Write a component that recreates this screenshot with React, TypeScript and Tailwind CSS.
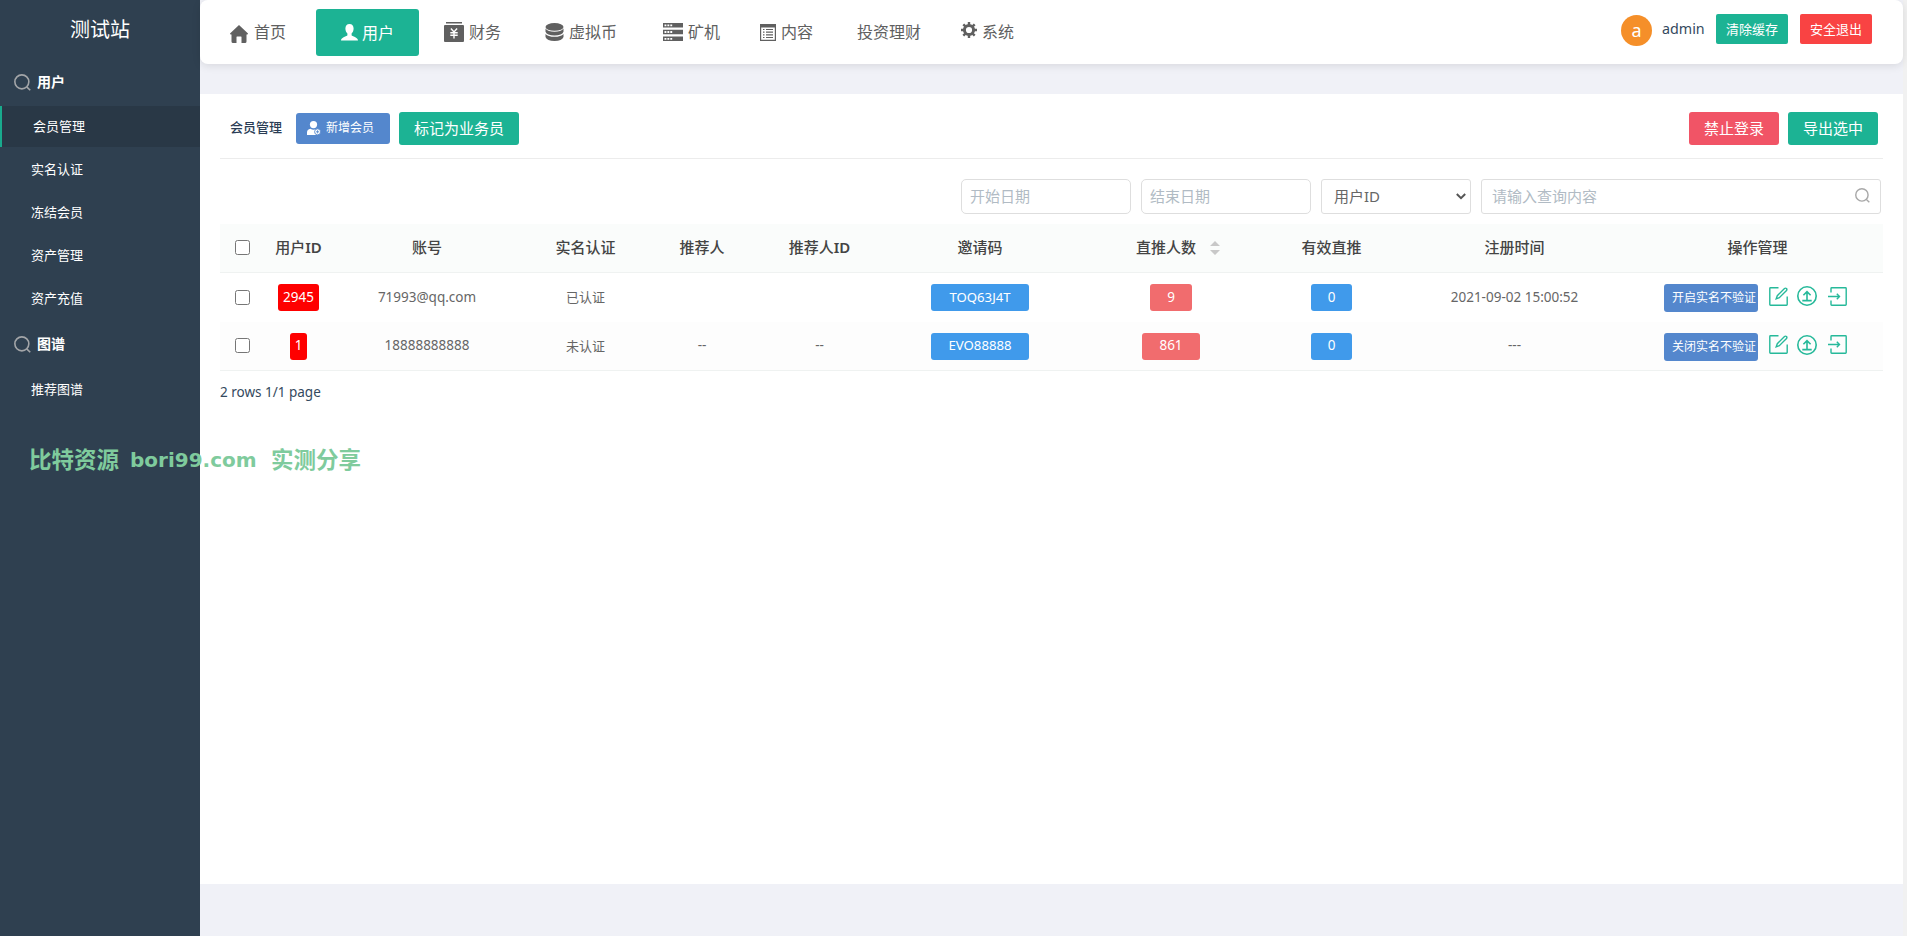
import { useState } from 'react';
import type { ReactNode } from 'react';

interface Member {
  id: string;
  account: string;
  verified: string;
  referrer: string;
  referrerId: string;
  code: string;
  direct: string;
  valid: string;
  createdAt: string;
  action: string;
}

const members: Member[] = [
  {
    id: '2945',
    account: '71993@qq.com',
    verified: '已认证',
    referrer: '',
    referrerId: '',
    code: 'TOQ63J4T',
    direct: '9',
    valid: '0',
    createdAt: '2021-09-02 15:00:52',
    action: '开启实名不验证',
  },
  {
    id: '1',
    account: '18888888888',
    verified: '未认证',
    referrer: '--',
    referrerId: '--',
    code: 'EVO88888',
    direct: '861',
    valid: '0',
    createdAt: '---',
    action: '关闭实名不验证',
  },
];

const menu = [
  { title: '用户', items: ['会员管理', '实名认证', '冻结会员', '资产管理', '资产充值'] },
  { title: '图谱', items: ['推荐图谱'] },
];

const rowGrid =
  'grid grid-cols-[45px_67px_190px_127px_106px_129px_192px_190px_131px_235px_251px] items-center text-center';

const SearchIcon = ({ className }: { className: string }) => (
  <svg viewBox="0 0 18 18" className={className} fill="none" stroke="currentColor" strokeWidth="1.7">
    <circle cx="8.3" cy="8.3" r="7.4" />
    <path d="M13.4 13.6L17.2 17.2" />
  </svg>
);

const HomeIcon = () => (
  <svg width="18" height="18" viewBox="0 0 18 18" fill="currentColor" className="relative top-[2px]">
    <path d="M9 0L18 8.6q0 .9-.9.9H16.500V16.500q0 1.500-1.500 1.500H11.500V12q0-.5-.5-.5H7q-.5 0-.5.5v6H3q-1.500 0-1.500-1.500V9.500H.9Q0 9.500 0 8.600Z" />
  </svg>
);

const UserIcon = () => (
  <svg width="17" height="17" viewBox="0 0 17 17" fill="currentColor">
    <path d="M8.500 0C11.200 0 12.600 1.900 12.600 4.600C12.600 6.800 11.800 8.500 10.600 9.500V11.200C11 12.400 17 13 17 16.500H0C0 13 6 12.400 6.400 11.200V9.500C5.200 8.500 4.400 6.800 4.400 4.600C4.400 1.900 5.800 0 8.500 0Z" />
  </svg>
);

const FinanceIcon = () => (
  <svg width="20" height="20" viewBox="0 0 20 20">
    <path d="M2 0H18V1.600H2ZM1 3H19Q20 3 20 4V19Q20 20 19 20H1Q0 20 0 19V4Q0 3 1 3Z" fill="currentColor" />
    <path d="M6.900 6.500L10 10L13.100 6.500M10 10V16.500M6.300 10.800H13.700M6.300 13.200H13.700" stroke="#fff" strokeWidth="1.400" fill="none" />
  </svg>
);

const CoinIcon = () => (
  <svg width="19" height="18" viewBox="0 0 19 18" fill="currentColor">
    <ellipse cx="9.500" cy="3.900" rx="9" ry="3.900" />
    <path d="M.5 5.600Q3 8.800 9.500 8.800T18.500 5.600V8.800Q17 12.600 9.500 12.600T.5 8.800Z" />
    <path d="M.5 10.900Q3 13.700 9.500 13.700T18.500 10.900V14Q17 18 9.500 18T.5 14Z" />
  </svg>
);

const MinerIcon = () => (
  <svg width="20" height="18" viewBox="0 0 20 18">
    <path d="M0 0H20V4.500H0ZM0 6.700H20V11.200H0ZM0 13.500H20V18H0Z" fill="currentColor" />
    <path d="M1.500 2.300H9.500M1.500 9H9.500M1.500 15.800H9.500" stroke="#fff" strokeWidth="1.800" strokeDasharray="1.900 1" />
  </svg>
);

const ContentIcon = () => (
  <svg width="16" height="17" viewBox="0 0 16 17">
    <path d="M0 0H16V17H0ZM1.200 3.600V15.800H14.800V3.600Z" fill="currentColor" fillRule="evenodd" />
    <path d="M3 5.500H4.500M6 5.500H13M3 8.200H4.500M6 8.200H13M3 10.900H4.500M6 10.900H13M3 13.500H4.500M6 13.500H13" stroke="currentColor" strokeWidth="1.200" />
  </svg>
);

const GearIcon = () => (
  <svg width="16" height="16" viewBox="0 0 16 16" fill="none" stroke="currentColor" className="relative -top-[2px]">
    <circle cx="8" cy="8" r="4.600" strokeWidth="3" />
    <path d="M8 0V3M8 13V16M0 8H3M13 8H16M2.300 2.300L4.400 4.400M11.600 11.600L13.700 13.700M2.300 13.700L4.400 11.600M11.600 4.400L13.700 2.300" strokeWidth="2.400" />
  </svg>
);

const AddUserIcon = () => (
  <svg width="14" height="14" viewBox="0 0 14 14">
    <circle cx="6.500" cy="3.600" r="3.600" fill="#fff" />
    <path d="M0 14V11.500Q0 8.300 3.500 7.800Q6.500 9.500 9.500 7.800Q12 8.500 12 11V14Z" fill="#fff" />
    <circle cx="10.600" cy="10.800" r="3" fill="#fff" stroke="#5487cd" strokeWidth=".9" />
    <path d="M10.600 9.200V12.400M9 10.800H12.200" stroke="#5487cd" strokeWidth=".9" />
  </svg>
);

const EditIcon = () => (
  <svg width="19" height="19" viewBox="0 0 19 19" fill="none" stroke="currentColor" strokeWidth="1.400">
    <path d="M9.500 .8H1.500Q.8.800.8 1.500V17.500Q.8 18.200 1.500 18.200H17.500Q18.200 18.200 18.200 17.500V9.500" />
    <path d="M7.200 11.800L8.300 8.700L15.500 1.500Q16.500.7 17.500 1.500Q18.300 2.500 17.500 3.500L10.300 10.700Z" />
  </svg>
);

const UploadIcon = () => (
  <svg width="20" height="20" viewBox="0 0 20 20" fill="none" stroke="currentColor" strokeWidth="1.600">
    <circle cx="10" cy="10" r="9.200" />
    <path d="M10 14.500V5.800M6.400 9.200L10 5.600L13.600 9.200M5.300 14.600H14.700" />
  </svg>
);

const LoginIcon = () => (
  <svg width="19" height="19" viewBox="0 0 19 19" fill="none" stroke="currentColor" strokeWidth="1.400">
    <path d="M3 5.500V1.500Q3 .8 3.700.8H17.500Q18.200.8 18.200 1.500V17.500Q18.200 18.200 17.500 18.200H3.700Q3 18.200 3 17.500V13.500" />
    <path d="M0 9.500H11.500M8.800 6.800L11.500 9.500L8.800 12.200" />
  </svg>
);

const NavItem = ({ icon, label, className }: { icon?: ReactNode; label: string; className: string }) => (
  <a href="#" className={`flex items-center ${className}`}>
    {icon}
    <span>{label}</span>
  </a>
);

const Tag = ({ className, children }: { className: string; children: ReactNode }) => (
  <span className={`inline-flex h-[27px] items-center justify-center rounded-[3px] align-middle text-white ${className}`}>
    {children}
  </span>
);

const Checkbox = () => (
  <span className="flex justify-center pb-px">
    <input type="checkbox" className="size-[15px]" />
  </span>
);

const Sorter = () => (
  <svg width="10" height="14" viewBox="0 0 10 14" fill="#c8c8c8">
    <path d="M5 0L10 5H0ZM0 9H10L5 14Z" />
  </svg>
);

const Sidebar = () => (
  <aside className="w-[200px] shrink-0 bg-[#2f4050] text-[13px] text-white">
    <h1 className="flex h-[59px] items-center justify-center text-[20px]">测试站</h1>
    {menu.map((group, index) => (
      <div key={group.title} className={index ? 'pt-px' : ''}>
        <div className="flex h-[47px] items-center gap-1.5 pb-px pl-3.5 text-[14px] font-bold">
          <SearchIcon className="size-[17px] text-[#a3a5a8]" />
          {group.title}
        </div>
        {group.items.map((item) =>
          item === '会员管理' ? (
            <a key={item} href="#" className="mb-px flex h-[41px] items-center border-l-2 border-[#19aa8d] bg-[#293846] pb-px pl-[31px]">
              {item}
            </a>
          ) : (
            <a key={item} href="#" className="flex h-[43px] items-center pl-[31px]">
              {item}
            </a>
          )
        )}
      </div>
    ))}
  </aside>
);

const Header = () => (
  <header className="relative flex h-16 justify-between rounded-lg bg-white text-[16px] text-[#606060] shadow-[0_2px_8px_rgba(0,0,0,0.1)]">
    <nav className="flex pt-[9px]">
      <NavItem icon={<HomeIcon />} label="首页" className="h-[46px] w-[116px] gap-1.5 pl-[30px]" />
      <NavItem
        icon={<UserIcon />}
        label="用户"
        className="h-[47px] w-[103px] gap-1 rounded-[3px] bg-[#1cb394] pl-[25px] text-white"
      />
      <NavItem icon={<FinanceIcon />} label="财务" className="h-[46px] w-[102px] gap-[5px] pl-[25px]" />
      <NavItem icon={<CoinIcon />} label="虚拟币" className="h-[46px] w-[117px] gap-[5px] pl-[24px]" />
      <NavItem icon={<MinerIcon />} label="矿机" className="h-[46px] w-[98px] gap-[5px] pl-[25px]" />
      <NavItem icon={<ContentIcon />} label="内容" className="h-[46px] w-[96px] gap-[5px] pl-[24px]" />
      <NavItem label="投资理财" className="h-[46px] w-[105px] pl-[25px]" />
      <NavItem icon={<GearIcon />} label="系统" className="h-[46px] gap-[5px] pl-[24px]" />
    </nav>
    <div className="flex h-[58px] items-center pr-[31px] text-[13px] text-white">
      <span className="mt-[3px] flex size-[31px] items-center justify-center rounded-full bg-[#f58f29] pb-0.5 text-[18px]">a</span>
      <span className="w-16 pl-2.5 text-[14.300px] text-[#34495e]">admin</span>
      <button className="h-[30px] w-[72px] rounded-[2px] bg-[#1cb394]">清除缓存</button>
      <button className="ml-3 h-[30px] w-[72px] rounded-[2px] bg-[#f94343]">安全退出</button>
    </div>
  </header>
);

const MemberRow = ({ member, odd }: { member: Member; odd: boolean }) => (
  <div className={`${rowGrid} h-[49px] text-[13.500px] text-[#666] ${odd ? 'border-b border-[#eff2f1] bg-[#fdfdfd]' : ''}`}>
    <Checkbox />
    <div>
      <Tag className="bg-[#fe0000] px-[5px]">{member.id}</Tag>
    </div>
    <div>{member.account}</div>
    <div className="text-[13px]">{member.verified}</div>
    <div>{member.referrer}</div>
    <div>{member.referrerId}</div>
    <div>
      <Tag className="w-[98px] bg-[#409aeb] text-[13.200px]">{member.code}</Tag>
    </div>
    <div>
      <Tag className="bg-[#f16c6e] px-[17px]">{member.direct}</Tag>
    </div>
    <div>
      <Tag className="bg-[#409aeb] px-[17px]">{member.valid}</Tag>
    </div>
    <div>{member.createdAt}</div>
    <div className="flex items-center pl-8 text-[#26b99a]">
      <button className="mr-[11px] mt-px h-[28px] w-[94px] whitespace-nowrap rounded-[3px] bg-[#5487cd] pl-2 text-left text-[12px] text-white">
        {member.action}
      </button>
      <span className="flex items-center pb-[3px]">
        <EditIcon />
        <span className="ml-[9px] mr-[11px]">
          <UploadIcon />
        </span>
        <LoginIcon />
      </span>
    </div>
  </div>
);

const App = () => {
  const [query, setQuery] = useState('');

  return (
    <div className="relative flex h-[936px] w-[1907px] overflow-hidden bg-[#f0f1f7] font-['Noto_Sans','Noto_Sans_CJK_SC',sans-serif] leading-none">
      <Sidebar />

      <div className="w-[1703px]">
        <Header />

        <main className="mt-[30px] h-[790px] bg-white px-5">
          <div className="flex h-[65px] items-center border-b border-[#ececec] pl-2.5 pr-[5px] pt-[5px] text-[15px] text-white">
            <span className="mb-[3px] mr-3.5 text-[13px] font-medium text-[#2b3d55]">会员管理</span>
            <button className="mr-[9px] flex h-[31px] w-[94px] items-center gap-[5px] rounded-[3px] bg-[#5487cd] pb-0.5 pl-[11px] text-[12px]">
              <AddUserIcon />
              新增会员
            </button>
            <button className="h-[33px] w-[120px] rounded-[3px] bg-[#1cb394]">标记为业务员</button>
            <button className="ml-auto h-[33px] w-[90px] rounded-[3px] bg-[#f15466]">禁止登录</button>
            <button className="ml-[9px] h-[33px] w-[90px] rounded-[3px] bg-[#1cb394]">导出选中</button>
          </div>

          <div className="mb-2.5 mt-5 flex h-[35px] justify-end gap-2.5 pr-0.5 text-[15px] text-[#666]">
            <input
              placeholder="开始日期"
              className="w-[170px] rounded-[5px] border border-[#dedede] px-2 pb-0.5 placeholder:text-[#b1bbc4]"
            />
            <input
              placeholder="结束日期"
              className="w-[170px] rounded-[5px] border border-[#dedede] px-2 pb-0.5 placeholder:text-[#b1bbc4]"
            />
            <div className="flex w-[150px] items-center justify-between rounded-[3px] border border-[#dedede] pl-3 pr-1">
              用户ID
              <svg width="10" height="7" viewBox="0 0 10 7" fill="none" stroke="#555" strokeWidth="2">
                <path d="M.8 1L5 5.200L9.200 1" />
              </svg>
            </div>
            <div className="flex w-[400px] items-center rounded-[3px] border border-[#dedede] pb-0.5 pl-2.5 pr-2.5">
              <input
                value={query}
                onChange={(e) => setQuery(e.target.value)}
                placeholder="请输入查询内容"
                className="min-w-0 flex-1 outline-none placeholder:text-[#b1bbc4]"
              />
              <SearchIcon className="size-[15px] text-[#a8a8a8]" />
            </div>
          </div>

          <div className={`${rowGrid} h-[49px] border-b border-[#eff2f1] bg-[#fafcfb] pb-px text-[15px] font-medium text-[#444]`}>
            <Checkbox />
            <div>
              用户<span className="font-semibold">ID</span>
            </div>
            <div>账号</div>
            <div>实名认证</div>
            <div>推荐人</div>
            <div>
              推荐人<span className="font-semibold">ID</span>
            </div>
            <div>邀请码</div>
            <div className="flex items-center justify-center gap-3.5 pl-3.5">
              直推人数
              <Sorter />
            </div>
            <div>有效直推</div>
            <div>注册时间</div>
            <div>操作管理</div>
          </div>
          {members.map((member, index) => (
            <MemberRow key={member.id} member={member} odd={index % 2 === 1} />
          ))}
          <p className="pt-[15px] text-[13.500px] text-[#34495e]">2 rows 1/1 page</p>
        </main>
      </div>

      <div className="w-1 bg-[#f1f1f1]" />

      <div className="absolute left-[29px] top-[449px] flex items-center whitespace-nowrap text-[22.500px] font-bold text-[#7fcb9d]">
        <span className="w-[101px]">比特资源</span>
        <span className="w-[141px] font-['DejaVu_Sans'] text-[20px]">bori99.com</span>
        <span>实测分享</span>
      </div>
    </div>
  );
};

export default App;
